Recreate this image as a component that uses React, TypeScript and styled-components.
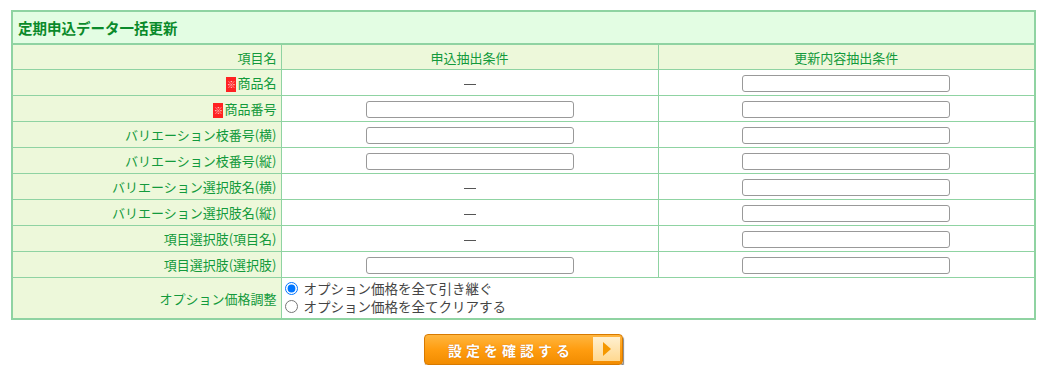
import React, { FC } from 'react';
import styled, { createGlobalStyle } from 'styled-components';

const GlobalStyle = createGlobalStyle`
  body {
    margin: 0;
    background: #fff;
    font-family: 'Noto Sans CJK JP', 'Noto Sans', sans-serif;
    font-size: 13px;
    color: #333;
  }
`;

const Page = styled.div`
  padding: 10px 23px 0 11px;
`;

const hatch = `
  background-color: #edf8da;
`;

const Table = styled.table`
  width: 100%;
  border-collapse: collapse;
  border: 2px solid #8fd3a2;
  table-layout: fixed;
  font-size: 13px;
  font-family: 'Noto Sans CJK JP', 'Noto Sans', sans-serif;
`;

const Title = styled.th`
  background: #e3fde3;
  border-bottom: 2px solid #8fd3a2;
  color: #0a8a2a;
  font-size: 14.5px;
  font-weight: bold;
  text-align: left;
  height: 31px;
  padding: 0 5px;
`;

const HeadCell = styled.th<{ $align?: string }>`
  ${hatch}
  border: 1px solid #8fd3a2;
  color: #139a3c;
  font-weight: normal;
  height: 24px;
  padding: 0 4px;
  text-align: ${(p) => p.$align || 'center'};
`;

const Label = styled.td`
  ${hatch}
  border: 1px solid #8fd3a2;
  color: #139a3c;
  text-align: right;
  height: 25px;
  padding: 0 4px;
  white-space: nowrap;
`;

const Cell = styled.td`
  border: 1px solid #8fd3a2;
  text-align: center;
  height: 25px;
  padding: 0;
`;

const RadioCell = styled.td`
  border: 1px solid #8fd3a2;
  padding: 1px 3px 3px;
  color: #444;
  font-size: 13.5px;
`;

const Field = styled.input`
  box-sizing: border-box;
  width: 208px;
  height: 17px;
  border: 1px solid #999;
  border-radius: 3px;
  vertical-align: middle;
  margin: 0;
`;

const Dash = styled.span`
  display: inline-block;
  width: 12px;
  height: 1px;
  background: #555;
  vertical-align: middle;
`;

const Required = styled.span`
  display: inline-block;
  width: 10px;
  height: 15px;
  background: #f22;
  color: #fdd;
  font-size: 9px;
  line-height: 15px;
  text-align: center;
  vertical-align: middle;
  margin-right: 1px;
  overflow: hidden;
`;

const RadioLine = styled.label`
  display: flex;
  align-items: center;
  gap: 6px;
  height: 18px;
  line-height: 18px;
  font-size: 13.5px;
  input {
    margin: 0;
    width: 13px;
    height: 13px;
  }
`;

const ButtonRow = styled.div`
  display: flex;
  justify-content: center;
  padding: 14px 0 0 0;
`;

const Button = styled.button`
  display: flex;
  align-items: stretch;
  width: 199px;
  height: 31px;
  padding: 0;
  border: 1px solid #d87a00;
  border-radius: 4px;
  background: linear-gradient(#ffb640, #ff9d10 50%, #f28c00);
  box-shadow: 1px 2px 1px #888;
  cursor: pointer;
`;

const ButtonText = styled.span`
  flex: 1;
  display: flex;
  align-items: center;
  justify-content: center;
  padding-left: 4px;
  color: #fff;
  font-family: 'Noto Sans CJK JP', sans-serif;
  font-weight: bold;
  font-size: 14px;
  letter-spacing: 4px;
  text-shadow: 0 0 1px #c06000;
`;

const Arrow = styled.span`
  width: 27px;
  margin: 2px 2px 3px 0;
  background: linear-gradient(#fff0d0, #ffd890);
  display: flex;
  align-items: center;
  justify-content: center;
  &::after {
    content: '';
    border-left: 8px solid #f59800;
    border-top: 7px solid transparent;
    border-bottom: 7px solid transparent;
  }
`;

type Row = { label: string; req?: boolean; apply: boolean };

const rows: Row[] = [
  { label: '商品名', req: true, apply: false },
  { label: '商品番号', req: true, apply: true },
  { label: 'バリエーション枝番号(横)', apply: true },
  { label: 'バリエーション枝番号(縦)', apply: true },
  { label: 'バリエーション選択肢名(横)', apply: false },
  { label: 'バリエーション選択肢名(縦)', apply: false },
  { label: '項目選択肢(項目名)', apply: false },
  { label: '項目選択肢(選択肢)', apply: true },
];

const App: FC = () => {
  return (
    <>
      <GlobalStyle />
      <Page>
        <Table>
          <colgroup>
            <col style={{ width: 269 }} />
            <col />
            <col />
          </colgroup>
          <thead>
            <tr>
              <Title colSpan={3}>定期申込データ一括更新</Title>
            </tr>
            <tr>
              <HeadCell $align='right'>項目名</HeadCell>
              <HeadCell>申込抽出条件</HeadCell>
              <HeadCell>更新内容抽出条件</HeadCell>
            </tr>
          </thead>
          <tbody>
            {rows.map((r) => (
              <tr key={r.label}>
                <Label>
                  {r.req && <Required>※</Required>}
                  {r.label}
                </Label>
                <Cell>{r.apply ? <Field type='text' /> : <Dash />}</Cell>
                <Cell>
                  <Field type='text' />
                </Cell>
              </tr>
            ))}
            <tr>
              <Label>オプション価格調整</Label>
              <RadioCell colSpan={2}>
                <RadioLine>
                  <input type='radio' name='opt' defaultChecked />
                  オプション価格を全て引き継ぐ
                </RadioLine>
                <RadioLine>
                  <input type='radio' name='opt' />
                  オプション価格を全てクリアする
                </RadioLine>
              </RadioCell>
            </tr>
          </tbody>
        </Table>
        <ButtonRow>
          <Button type='button'>
            <ButtonText>設定を確認する</ButtonText>
            <Arrow />
          </Button>
        </ButtonRow>
      </Page>
    </>
  );
};

export default App;
